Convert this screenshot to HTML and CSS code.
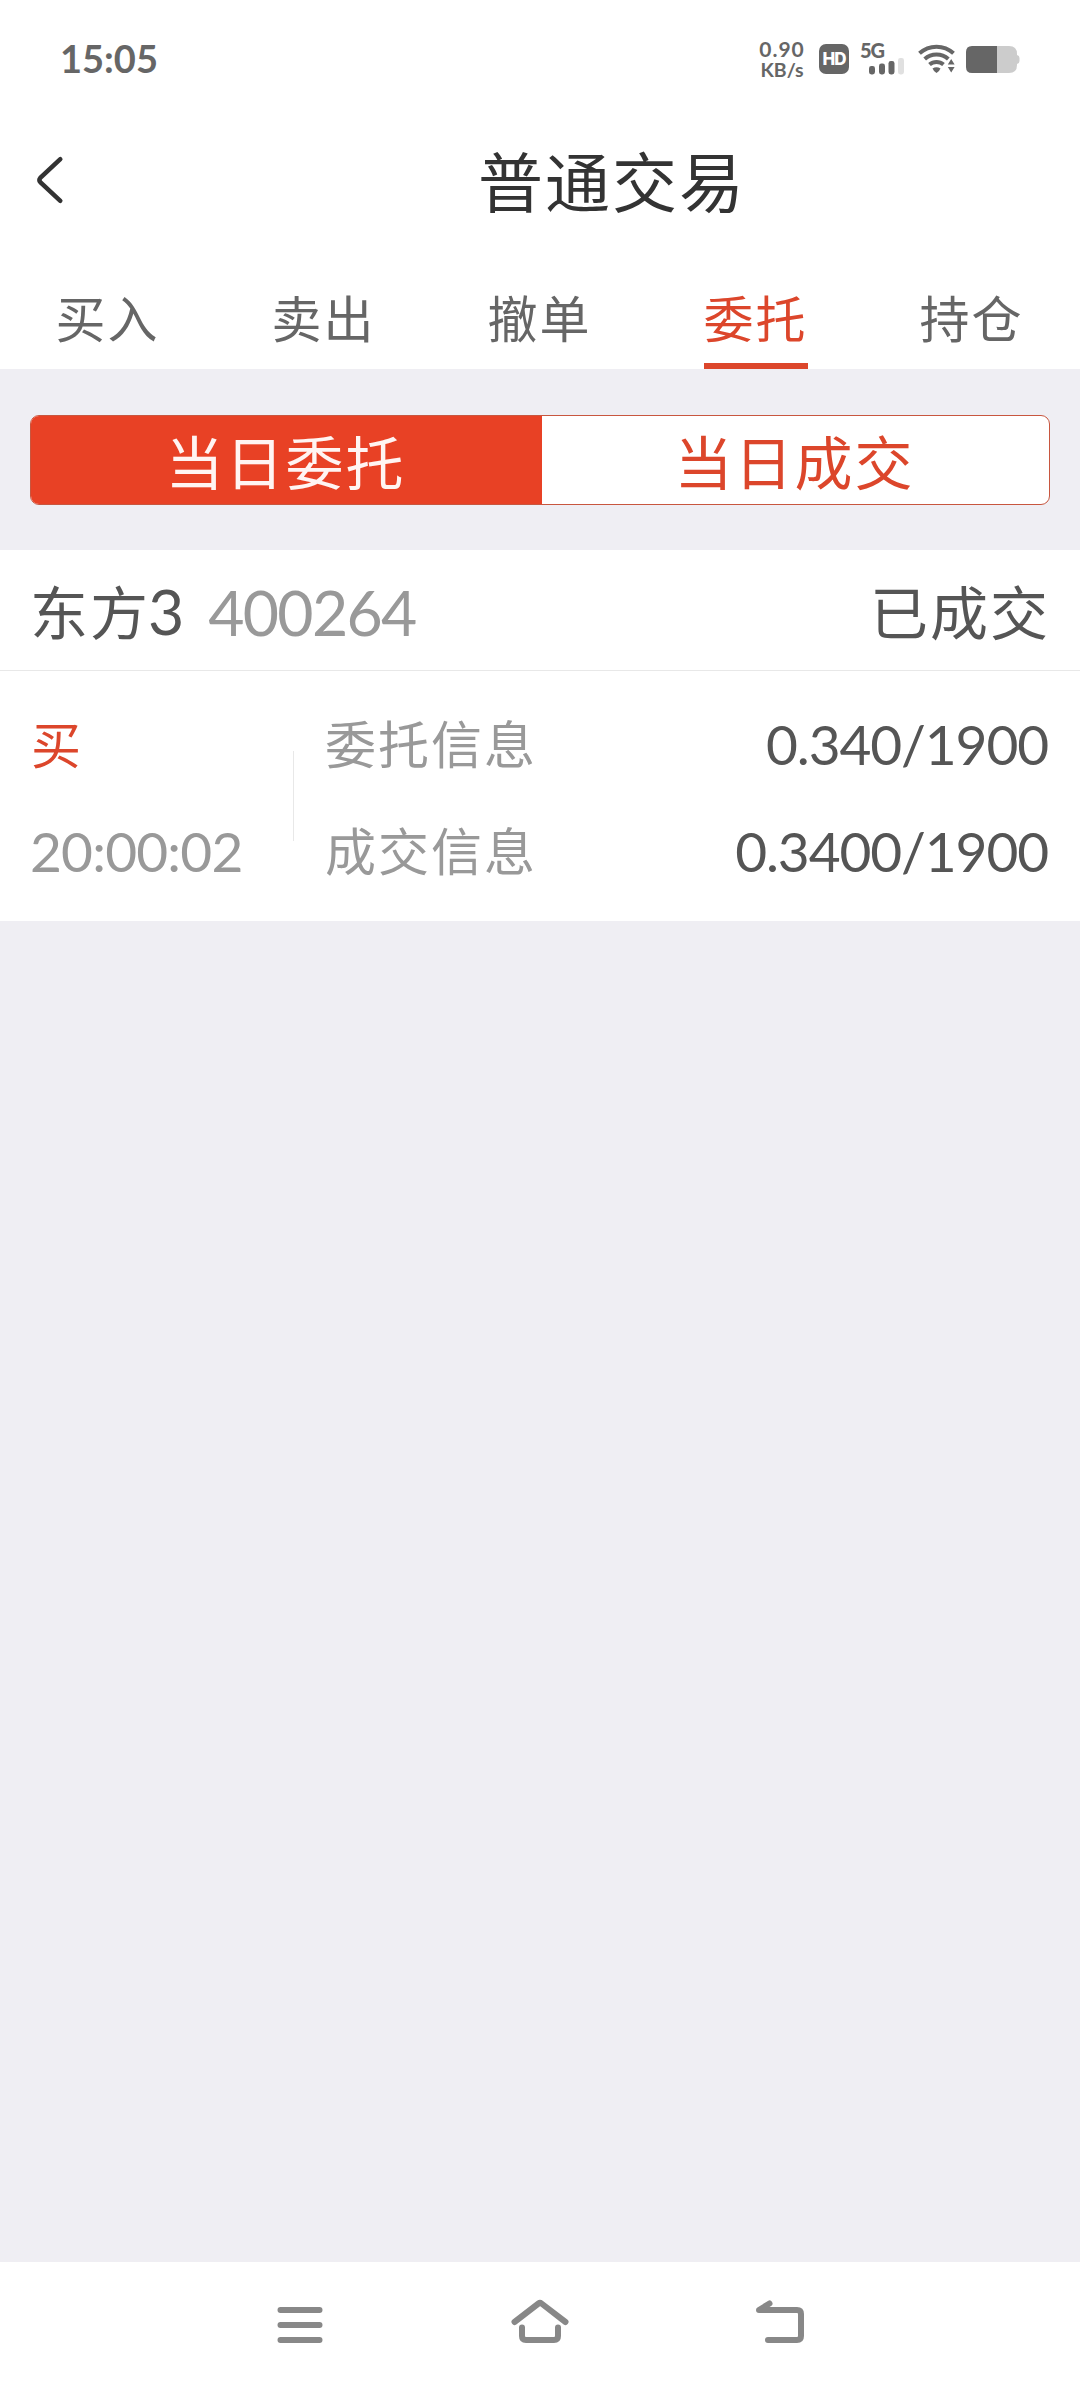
FILE: index.html
```html
<!DOCTYPE html>
<html lang="zh-CN">
<head>
<meta charset="utf-8">
<title>普通交易</title>
<link rel="stylesheet" href="styles.css">
</head>
<body>
<div class="status-bar">
  <span class="clock">15:05</span>
  <div class="status-icons">
    <div class="net-speed"><span class="speed-value">0.90</span><span class="speed-unit">KB/s</span></div>
    <span class="hd-badge">HD</span>
    <div class="signal">
      <span class="signal-type">5G</span>
      <svg class="signal-bars" width="36" height="17" viewBox="0 0 36 17">
        <rect x="0" y="8" width="6" height="8.5" rx="2.4"/>
        <rect x="10" y="5.5" width="6" height="11" rx="2.4"/>
        <rect x="19.5" y="3" width="6" height="13.5" rx="2.4"/>
        <rect class="bar-off" x="29" y="0" width="6" height="16.5" rx="2.4"/>
      </svg>
    </div>
    <svg class="wifi" width="38" height="30" viewBox="0 0 38 30">
      <g fill="none" stroke="#666" stroke-width="4">
        <path d="M1.5 9.300A25 25 0 0 1 35.5 9.300"/>
        <path d="M6.700 15A17.500 17.500 0 0 1 30.300 15"/>
        <path d="M11.500 20.600A10.500 10.500 0 0 1 25.500 20.600"/>
      </g>
      <path fill="#666" d="M14.500 24.500Q18.500 21.800 22.500 24.500Q21 28 18.500 29Q16 28 14.500 24.500Z"/>
      <path fill="#666" d="M29.800 20.500L33.200 15L36.600 20.500ZM29.800 23L36.600 23L33.200 28.500Z"/>
    </svg>
    <svg class="battery" width="54" height="27" viewBox="0 0 54 27">
      <path fill="#ccc" d="M30 0H43Q51 0 51 8V9Q53.500 9.500 53.500 12V15Q53.500 17.500 51 18V19Q51 27 43 27H30Z"/>
      <path fill="#666" d="M6 0H31V27H6Q0 27 0 21V6Q0 0 6 0Z"/>
    </svg>
  </div>
</div>

<header class="title-bar">
  <svg class="back" width="30" height="52" viewBox="0 0 30 52"><path d="M25.300 5.200L5.300 23.800Q3.500 26 5.300 28.200L25.300 46.800"/></svg>
  <h1 class="title">普通交易</h1>
</header>

<nav class="tabs">
  <div class="tab"><span class="tab-label">买入</span></div>
  <div class="tab"><span class="tab-label">卖出</span></div>
  <div class="tab"><span class="tab-label">撤单</span></div>
  <div class="tab"><span class="tab-label active">委托</span></div>
  <div class="tab"><span class="tab-label">持仓</span></div>
</nav>

<main class="content">
  <div class="segments">
    <div class="segment selected">当日委托</div>
    <div class="segment">当日成交</div>
  </div>
  <section class="order">
    <div class="order-head">
      <span class="stock-name">东方<span class="num">3</span></span>
      <span class="stock-code num">400264</span>
      <span class="order-state">已成交</span>
    </div>
    <div class="order-body">
      <div class="order-side">
        <span class="side-buy">买</span>
        <span class="time num">20:00:02</span>
      </div>
      <div class="order-info">
        <div class="info-row"><span class="info-label">委托信息</span><span class="info-value num">0.340/1900</span></div>
        <div class="info-row"><span class="info-label">成交信息</span><span class="info-value num">0.3400/1900</span></div>
      </div>
    </div>
  </section>
</main>

<footer class="system-nav">
  <svg width="60" height="60" viewBox="0 0 60 60"><path d="M10.500 18H49.500M10.500 33H49.500M10.500 48H49.500"/></svg>
  <svg width="60" height="60" viewBox="0 0 60 60"><path d="M4.500 30L28.500 11.500Q30 10.300 31.500 11.500L55.500 30M12 35.500V44Q12 48 16 48H44Q48 48 48 44V35.500"/></svg>
  <svg width="60" height="60" viewBox="0 0 60 60"><path d="M28 48H57Q61 48 61 44V22Q61 18 57 18H19L29.500 11.500" transform="translate(-10 0)"/></svg>
</footer>
</body>
</html>
```

FILE: styles.css
```css
* {
  box-sizing: border-box;
}

body {
  margin: 0;
  width: 1080px;
  height: 2388px;
  display: flex;
  flex-direction: column;
  background: #efeef3;
  color: #555;
  font-family: "Noto Sans CJK SC", sans-serif;
}

svg {
  display: block;
  flex: none;
}

.num {
  font-family: Lato, sans-serif;
}

/* Status bar */
.status-bar {
  height: 120px;
  padding: 0 60px 0 60px;
  display: flex;
  justify-content: space-between;
  background: #fff;
  color: #666;
  font-family: Lato, sans-serif;
  font-weight: 700;
}

.clock {
  font-size: 38px;
  line-height: 116px;
}

.status-icons {
  height: 118px;
  display: flex;
  align-items: center;
}

.net-speed {
  width: 48px;
  margin-right: 13px;
  display: flex;
  flex-direction: column;
  align-items: center;
  font-size: 21px;
  line-height: 21px;
}

.speed-value {
  letter-spacing: 1px;
}

.speed-unit {
  font-size: 19.5px;
}

.hd-badge {
  width: 30px;
  height: 30px;
  margin-right: 11px;
  border-radius: 7px;
  background: #666;
  color: #fff;
  font-family: Inter, sans-serif;
  font-size: 17px;
  font-weight: 800;
  line-height: 30px;
  text-align: center;
  letter-spacing: -1px;
}

.signal {
  width: 45px;
  height: 32px;
  margin-right: 13px;
}

.signal-type {
  display: block;
  height: 15px;
  font-size: 20px;
  font-weight: 900;
  line-height: 15px;
  letter-spacing: -1px;
}

.signal-bars {
  margin-left: 9px;
  fill: #666;
}

.bar-off {
  fill: #e0e0e0;
}

.wifi {
  margin-right: 10px;
}

/* Title */
.title-bar {
  height: 130px;
  padding: 34px 0 0 35px;
  display: flex;
  background: #fff;
}

.back path {
  fill: none;
  stroke: #333;
  stroke-width: 4.5;
  stroke-linecap: round;
}

.title {
  margin: -34px 0 0 413px;
  color: #333;
  font-size: 65px;
  font-weight: 400;
  line-height: 119px;
  letter-spacing: 2px;
}

/* Tabs */
.tabs {
  height: 119px;
  display: flex;
  background: #fff;
}

.tab {
  flex: 1;
  display: flex;
  justify-content: center;
  padding-right: 1px;
}

.tab-label {
  height: 119px;
  padding-top: 30px;
  color: #666;
  font-size: 50px;
  line-height: 72px;
  letter-spacing: 2px;
}

.tab-label.active {
  color: #dc462b;
  border-bottom: 6px solid #dc462b;
}

/* Content */
.content {
  flex: 1;
}

.segments {
  height: 90px;
  margin: 46px 30px 45px;
  display: flex;
  overflow: hidden;
  border: 1px solid #c8563f;
  border-radius: 9px;
  background: #fff;
}

.segment {
  flex: 1;
  padding-right: 2px;
  color: #dc462b;
  font-size: 58px;
  line-height: 88px;
  text-align: center;
  letter-spacing: 2px;
}

.segment.selected {
  flex: none;
  width: 511px;
  background: #e84125;
  color: #fff4f2;
}

.order {
  height: 371px;
  background: #fff;
}

.order-head {
  height: 121px;
  padding: 0 30px;
  display: flex;
  border-bottom: 1px solid #e8e8e8;
  font-size: 58px;
  line-height: 120px;
  letter-spacing: 2px;
}

.stock-name .num {
  margin-left: -2px;
  font-size: 62.5px;
  letter-spacing: -2px;
}

.stock-code {
  margin-left: 26px;
  color: #999;
  font-size: 62.5px;
  line-height: 124px;
  letter-spacing: -1.7px;
}

.order-state {
  margin-left: auto;
}

.order-body {
  height: 250px;
  padding: 17px 30px 0;
  display: flex;
}

.order-side {
  width: 264px;
  height: 214px;
  display: flex;
  flex-direction: column;
  line-height: 109px;
  background: linear-gradient(#e8e8e8, #e8e8e8) right 63px / 1px 90px no-repeat;
}

.side-buy {
  height: 107px;
  padding-left: 1px;
  color: #dc462b;
  font-size: 50px;
}

.time {
  color: #999;
  font-size: 55px;
  line-height: 113px;
  letter-spacing: -0.8px;
}

.order-info {
  flex: 1;
  padding-left: 31px;
}

.info-row {
  height: 107px;
  display: flex;
  justify-content: space-between;
  line-height: 109px;
}

.info-label {
  color: #999;
  font-size: 51px;
  letter-spacing: 2px;
}

.info-value {
  margin-right: 2px;
  font-size: 55px;
  line-height: 112px;
  letter-spacing: -1.1px;
}

/* System navigation */
.system-nav {
  height: 126px;
  padding: 30px 270px 0;
  display: flex;
  justify-content: space-between;
  background: #fff;
}

.system-nav path {
  fill: none;
  stroke: #888;
  stroke-width: 6;
  stroke-linecap: round;
  stroke-linejoin: round;
}
```
